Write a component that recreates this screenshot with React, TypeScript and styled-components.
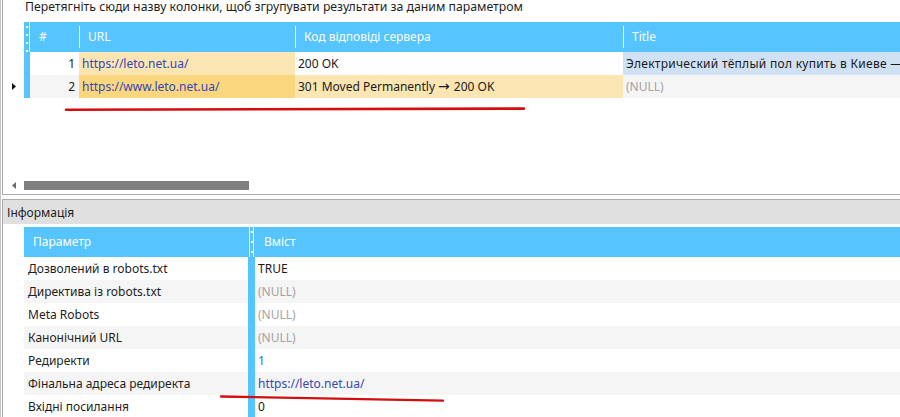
import React from 'react';
import styled, { createGlobalStyle } from 'styled-components';

const GlobalStyle = createGlobalStyle`
  html, body {
    margin: 0;
    padding: 0;
    background: #ffffff;
  }
  body {
    font-family: "Noto Sans", "Open Sans", sans-serif;
    font-size: 12px;
    color: #1e1e1e;
  }
`;

const HEADER_BLUE = '#56c4ff';
const ZEBRA = '#f5f5f5';
const URL_CELL = '#fbe5b2';
const URL_FOCUS = '#fad67e';
const TITLE_SELECTED = '#cfe1f3';

type Tone = 'text' | 'link' | 'number' | 'null';

const toneColor: Record<Tone, string> = {
  text: '#1a1a1a',
  link: '#3446b8',
  number: '#1e6fd9',
  null: '#a3a3a3',
};

const pageRows = [
  {
    n: 1,
    url: 'https://leto.net.ua/',
    code: '200 OK',
    title: 'Электрический тёплый пол купить в Киеве — Лето, тёплые полы',
    titleNull: false,
    current: false,
  },
  {
    n: 2,
    url: 'https://www.leto.net.ua/',
    code: '301 Moved Permanently → 200 OK',
    title: '(NULL)',
    titleNull: true,
    current: true,
  },
];

const infoRows: { label: string; value: string; tone: Tone }[] = [
  { label: 'Дозволений в robots.txt', value: 'TRUE', tone: 'text' },
  { label: 'Директива із robots.txt', value: '(NULL)', tone: 'null' },
  { label: 'Meta Robots', value: '(NULL)', tone: 'null' },
  { label: 'Канонічний URL', value: '(NULL)', tone: 'null' },
  { label: 'Редиректи', value: '1', tone: 'number' },
  { label: 'Фінальна адреса редиректа', value: 'https://leto.net.ua/', tone: 'link' },
  { label: 'Вхідні посилання', value: '0', tone: 'text' },
];

const Screen = styled.div`
  position: relative;
  width: 900px;
  height: 417px;
  overflow: hidden;
  box-sizing: border-box;
  border-left: 1px solid #c6c6c6;
  background: #ffffff;
`;

/* ---------- results grid ---------- */

const ResultsPanel = styled.section`
  box-sizing: border-box;
  height: 195px;
  margin-left: 1px;
  border-left: 1px solid #a9a9a9;
  border-bottom: 1px solid #a9a9a9;
  display: flex;
  flex-direction: column;
`;

const GroupHint = styled.div`
  height: 22px;
  padding-left: 22px;
  font-size: 12.25px;
  line-height: 14px;
  color: #1e1e1e;
  white-space: nowrap;
`;

const GridRow = styled.div<{ $height: number }>`
  display: flex;
  height: ${({ $height }) => $height}px;
  line-height: ${({ $height }) => $height}px;
  white-space: nowrap;
`;

const Pointer = styled.div`
  width: 21px;
  flex: none;
  display: flex;
  align-items: center;
  padding-left: 9px;
  box-sizing: border-box;
`;

const HandleStrip = styled.div`
  position: relative;
  width: 6px;
  flex: none;
  box-sizing: border-box;
  background: ${HEADER_BLUE};
  border-right: 1px solid #ffffff;
`;

const Dots = styled.div<{ $top: number; $gap: number }>`
  position: absolute;
  left: 2px;
  top: ${({ $top }) => $top}px;
  display: flex;
  flex-direction: column;
  gap: ${({ $gap }) => $gap}px;

  & > i {
    display: block;
    width: 2px;
    height: 2px;
    background: #ffffff;
  }
`;

const RowStrip = styled.div`
  width: 6px;
  flex: none;
  background: ${HEADER_BLUE};
`;

const HeadCell = styled.div<{ $width?: number; $divider?: boolean }>`
  position: relative;
  box-sizing: border-box;
  ${({ $width }) => ($width ? `width: ${$width}px; flex: none;` : 'flex: 1;')}
  background: ${HEADER_BLUE};
  color: #ffffff;
  padding-left: 9px;

  &::before {
    content: '';
    display: ${({ $divider }) => ($divider ? 'block' : 'none')};
    position: absolute;
    left: 0;
    top: 4px;
    bottom: 4px;
    width: 1px;
    background: #ffffff;
  }
`;

const Cell = styled.div<{
  $width?: number;
  $bg: string;
  $align?: 'left' | 'right';
  $tone: Tone;
  $tracking?: number;
}>`
  box-sizing: border-box;
  ${({ $width }) => ($width ? `width: ${$width}px; flex: none;` : 'flex: 1;')}
  overflow: hidden;
  background: ${({ $bg }) => $bg};
  color: ${({ $tone }) => toneColor[$tone]};
  text-align: ${({ $align }) => $align ?? 'left'};
  letter-spacing: ${({ $tracking }) => $tracking ?? 0}px;
  padding: 0 4px 0 3px;
`;

// the redirect arrow is drawn wide, like the grid's native font
const Arrow = styled.span`
  font-family: "DejaVu Sans", sans-serif;
  font-size: 14px;
  margin: 0 4px 0 3px;
`;

const EmptyArea = styled.div`
  flex: 1;
`;

const ScrollBar = styled.div`
  display: flex;
  align-items: center;
  height: 9px;
  margin-bottom: 4px;
`;

const ScrollArrow = styled.div`
  width: 21px;
  flex: none;
  display: flex;
  justify-content: flex-end;
  padding-right: 8px;
  box-sizing: border-box;
`;

const ScrollThumb = styled.div`
  width: 225px;
  height: 9px;
  background: #808080;
`;

/* ---------- info panel ---------- */

const InfoPanel = styled.section`
  margin-top: 4px;
  margin-left: 1px;
  border-left: 1px solid #a9a9a9;
  border-top: 1px solid #acacac;
`;

const InfoCaption = styled.div`
  height: 24px;
  line-height: 25px;
  padding-left: 4px;
  background: #e0e0e0;
  color: #1e1e1e;
  margin-bottom: 3px;
`;

const InfoTable = styled.div`
  margin-left: 21px;
`;

const InfoHead = styled.div<{ $width?: number }>`
  box-sizing: border-box;
  ${({ $width }) => ($width ? `width: ${$width}px; flex: none;` : 'flex: 1;')}
  background: ${HEADER_BLUE};
  color: #ffffff;
  padding-left: 9px;
`;

const BandSplitter = styled.div`
  position: relative;
  width: 7px;
  flex: none;
  background: linear-gradient(
    to right,
    ${HEADER_BLUE} 0 1px,
    #ffffff 1px 2px,
    ${HEADER_BLUE} 2px 5px,
    #ffffff 5px 6px,
    ${HEADER_BLUE} 6px
  );

  ${Dots} {
    left: 3px;
  }
`;

const InfoRow = styled(GridRow)<{ $striped: boolean }>`
  background: ${({ $striped }) => ($striped ? ZEBRA : '#ffffff')};
`;

const InfoLabel = styled.div`
  width: 224px;
  flex: none;
  box-sizing: border-box;
  padding-left: 4px;
  color: #1e1e1e;
`;

const BandStrip = styled.div`
  width: 7px;
  flex: none;
  background: ${HEADER_BLUE};
`;

const InfoValue = styled.div<{ $tone: Tone }>`
  flex: 1;
  padding-left: 3px;
  color: ${({ $tone }) => toneColor[$tone]};
`;

const Marks = styled.svg`
  position: absolute;
  left: 0;
  top: 0;
  pointer-events: none;
`;

const HandleDots: React.FC<{ top: number; gap: number; count: number }> = ({ top, gap, count }) => (
  <Dots $top={top} $gap={gap}>
    {Array.from({ length: count }, (_, i) => (
      <i key={i} />
    ))}
  </Dots>
);

const RowPointer = () => (
  <svg width="4" height="7" viewBox="0 0 4 7">
    <polygon points="0,0 4,3.5 0,7" fill="#111" />
  </svg>
);

const LeftArrow = () => (
  <svg width="4" height="7" viewBox="0 0 4 7">
    <polygon points="4,0 0,3.5 4,7" fill="#6a6a6a" />
  </svg>
);

const withArrows = (text: string) =>
  text
    .split('→')
    .map((part) => part.trim())
    .flatMap((part, i) => (i === 0 ? [part] : [<Arrow key={i}>→</Arrow>, part]));

export default function App() {
  return (
    <>
      <GlobalStyle />
      <Screen>
        <ResultsPanel>
          <GroupHint>Перетягніть сюди назву колонки, щоб згрупувати результати за даним параметром</GroupHint>

          <GridRow $height={30}>
            <Pointer />
            <HandleStrip>
              <HandleDots top={4} gap={6} count={4} />
            </HandleStrip>
            <HeadCell $width={49}>#</HeadCell>
            <HeadCell $width={216} $divider>URL</HeadCell>
            <HeadCell $width={328} $divider>Код відповіді сервера</HeadCell>
            <HeadCell $divider>Title</HeadCell>
          </GridRow>

          {pageRows.map((row) => (
            <GridRow key={row.n} $height={23}>
              <Pointer>{row.current && <RowPointer />}</Pointer>
              <RowStrip />
              <Cell $width={49} $bg={row.current ? ZEBRA : '#fff'} $align="right" $tone="text">
                {row.n}
              </Cell>
              <Cell $width={216} $bg={row.current ? URL_FOCUS : URL_CELL} $tone="link">
                {row.url}
              </Cell>
              <Cell $width={328} $bg={row.current ? URL_CELL : '#fff'} $tone="text">
                {withArrows(row.code)}
              </Cell>
              <Cell
                $bg={row.current ? ZEBRA : TITLE_SELECTED}
                $tone={row.titleNull ? 'null' : 'text'}
                $tracking={row.titleNull ? 0 : 0.28}
              >
                {row.title}
              </Cell>
            </GridRow>
          ))}

          <EmptyArea />

          <ScrollBar>
            <ScrollArrow>
              <LeftArrow />
            </ScrollArrow>
            <ScrollThumb />
          </ScrollBar>
        </ResultsPanel>

        <InfoPanel>
          <InfoCaption>Інформація</InfoCaption>
          <InfoTable>
            <GridRow $height={30}>
              <InfoHead $width={224}>Параметр</InfoHead>
              <BandSplitter>
                <HandleDots top={4} gap={8} count={3} />
              </BandSplitter>
              <InfoHead>Вміст</InfoHead>
            </GridRow>
            {infoRows.map((row, i) => (
              <InfoRow key={row.label} $height={23} $striped={i % 2 === 1}>
                <InfoLabel>{row.label}</InfoLabel>
                <BandStrip />
                <InfoValue $tone={row.tone}>{row.value}</InfoValue>
              </InfoRow>
            ))}
          </InfoTable>
        </InfoPanel>

        <Marks width="900" height="417" viewBox="0 0 900 417">
          <line x1="65" y1="109.8" x2="523" y2="108.6" stroke="#d40d0d" strokeWidth="2.6" strokeLinecap="round" />
          <line x1="220" y1="396.5" x2="442" y2="400.6" stroke="#d40d0d" strokeWidth="2.4" strokeLinecap="round" />
        </Marks>
      </Screen>
    </>
  );
}
